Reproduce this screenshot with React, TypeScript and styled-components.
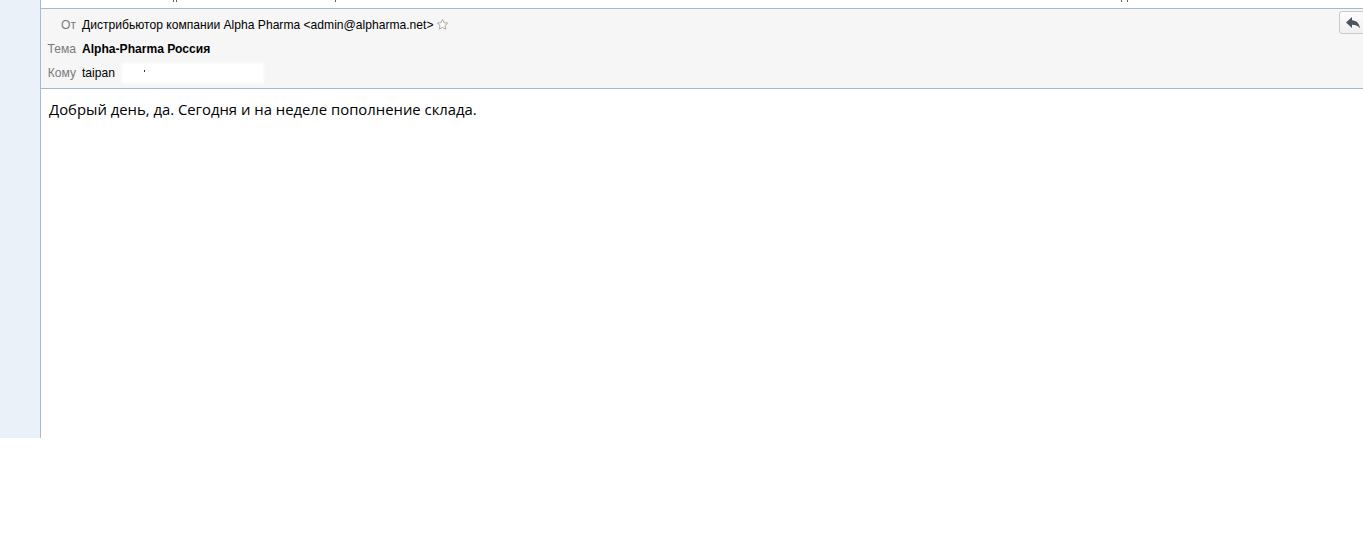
import React from "react";
import styled, { createGlobalStyle } from "styled-components";

const Global = createGlobalStyle`
  html, body { margin: 0; padding: 0; background: #ffffff; }
  body { font-family: "Liberation Sans", Arial, sans-serif; }
`;

const Page = styled.div`
  width: 1363px;
  height: 533px;
  background: #ffffff;
`;

const Frame = styled.div`
  display: flex;
  height: 438px;
`;

const Sidebar = styled.div`
  width: 40px;
  flex: none;
  background: #ebf1f9;
  border-right: 1px solid #a9b9cf;
`;

const Main = styled.div`
  flex: 1;
  display: flex;
  flex-direction: column;
  min-width: 0;
`;

const TopStrip = styled.div`
  height: 8px;
  background: #ffffff;
  position: relative;
  overflow: hidden;
`;

const Descender = styled.span<{ $x: number }>`
  position: absolute;
  top: 0;
  left: ${(p) => p.$x}px;
  width: 1px;
  height: 2px;
  background: #6a5a7a;
`;

const Header = styled.div`
  position: relative;
  background: #f6f6f6;
  border-top: 1px solid #a8b7cb;
  border-bottom: 1px solid #a8b7cb;
  padding-top: 4px;
  box-sizing: border-box;
  height: 81px;
`;

const Row = styled.div`
  display: flex;
  align-items: center;
  height: 24px;
  font-size: 12.1px;
`;

const Label = styled.div`
  width: 35px;
  text-align: right;
  color: #7a7a7a;
  margin-right: 6px;
`;

const Value = styled.div<{ $bold?: boolean }>`
  color: #000;
  font-weight: ${(p) => (p.$bold ? 700 : 400)};
  display: flex;
  align-items: center;
`;

const Star = styled.svg`
  margin-left: 3px;
  margin-top: -2px;
`;

const Redacted = styled.span`
  display: inline-block;
  width: 140px;
  height: 18px;
  margin-left: 8px;
  background: #ffffff;
  box-shadow: 0 0 3px 1px #ffffff;
  position: relative;
`;

const Tick = styled.span`
  position: absolute;
  left: 21px;
  top: 6px;
  width: 1px;
  height: 2px;
  background: #333;
`;

const ReplyButton = styled.button`
  position: absolute;
  top: 2px;
  left: 1298px;
  width: 30px;
  height: 23px;
  padding: 0;
  border: 1px solid #c9c9c9;
  border-radius: 3px;
  background: linear-gradient(#fdfdfd, #f0f0f0);
  display: flex;
  align-items: center;
  padding-left: 5px;
  box-sizing: border-box;
`;

const Body = styled.div`
  flex: 1;
  background: #ffffff;
  padding: 10px 0 0 8px;
  font-family: "Open Sans", "Noto Sans", sans-serif;
  font-size: 14.85px;
  color: #000;
`;

export default function App() {
  return (
    <Page>
      <Global />
      <Frame>
        <Sidebar />
        <Main>
          <TopStrip>
            <Descender $x={132} />
            <Descender $x={135} />
            <Descender $x={294} />
            <Descender $x={1080} />
            <Descender $x={1086} />
          </TopStrip>
          <Header>
            <Row>
              <Label>От</Label>
              <Value>
                Дистрибьютор компании Alpha Pharma &lt;admin@alpharma.net&gt;
                <Star width="13" height="13" viewBox="0 0 24 24">
                  <path
                    d="M12 2.5l2.9 6.2 6.7.7-5 4.6 1.4 6.7L12 17.3l-6 3.4 1.4-6.7-5-4.6 6.7-.7z"
                    fill="#fbfbfb"
                    stroke="#a8a8a8"
                    strokeWidth="1.8"
                    strokeLinejoin="round"
                  />
                </Star>
              </Value>
            </Row>
            <Row>
              <Label>Тема</Label>
              <Value $bold>Alpha-Pharma Россия</Value>
            </Row>
            <Row>
              <Label>Кому</Label>
              <Value>
                taipan
                <Redacted>
                  <Tick />
                </Redacted>
              </Value>
            </Row>
            <ReplyButton aria-label="reply">
              <svg width="16" height="14" viewBox="0 0 16 14">
                <path
                  d="M1 6.5L7 1v3.2c4.5.2 7.5 3 8 8.3-1.6-2.7-4-3.8-8-3.8V12z"
                  fill="#4a5560"
                />
              </svg>
            </ReplyButton>
          </Header>
          <Body>Добрый день, да. Сегодня и на неделе пополнение склада.</Body>
        </Main>
      </Frame>
    </Page>
  );
}
